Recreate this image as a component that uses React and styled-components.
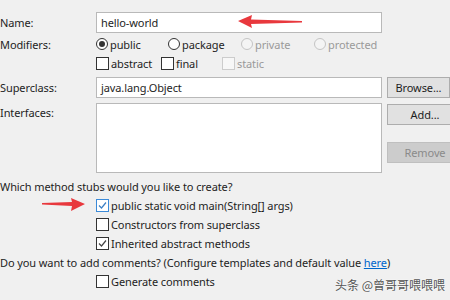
import React from "react";
import styled, { createGlobalStyle } from "styled-components";

const Global = createGlobalStyle`
  html, body {
    margin: 0;
    padding: 0;
    overflow: hidden;
    background: #f0f0f0;
  }
`;

const Page = styled.div`
  position: relative;
  width: 450px;
  height: 300px;
  overflow: hidden;
  background: #f0f0f0;
  font-family: "Noto Sans", "Noto Sans CJK SC", sans-serif;
  font-size: 11px;
  letter-spacing: -0.1px;
  color: #1e1e1e;
  padding-top: 12px;
  box-sizing: border-box;
`;

const Row = styled.div`
  display: flex;
  align-items: ${(p) => p.$align || "center"};
  height: ${(p) => p.$h}px;
  margin-top: ${(p) => p.$mt || 0}px;
`;

const Label = styled.div`
  width: 96px;
  flex: none;
  align-self: ${(p) => (p.$top ? "flex-start" : "center")};
  line-height: 19px;
  white-space: nowrap;
`;

const Indent = styled.div`
  width: 96px;
  flex: none;
`;

const Field = styled.div`
  width: 286px;
  height: ${(p) => p.$h || 21}px;
  box-sizing: border-box;
  flex: none;
  background: #fff;
  border: 1px solid #b9b9b9;
  padding: 0 4px;
  line-height: 19px;
  align-self: flex-start;
`;

const Button = styled.div`
  width: 76px;
  height: ${(p) => p.$h || 21}px;
  box-sizing: border-box;
  margin-left: 5px;
  margin-top: ${(p) => p.$mt || 0}px;
  background: ${(p) => (p.$disabled ? "#cccccc" : "#e1e1e1")};
  border: 1px solid ${(p) => (p.$disabled ? "#bfbfbf" : "#adadad")};
  color: ${(p) => (p.$disabled ? "#8a8a8a" : "#1e1e1e")};
  text-align: center;
  line-height: 19px;
`;

const ButtonCol = styled.div`
  display: flex;
  flex-direction: column;
  align-self: flex-start;
`;

const Option = styled.label`
  display: flex;
  align-items: center;
  gap: 2px;
  width: ${(p) => p.$w}px;
  flex: none;
  color: ${(p) => (p.$disabled ? "#9a9a9a" : "#1e1e1e")};
  white-space: nowrap;
`;

const Radio = styled.span`
  width: 12px;
  height: 12px;
  box-sizing: border-box;
  border-radius: 50%;
  border: 1px solid ${(p) => (p.$disabled ? "#c4c4c4" : "#333")};
  background: ${(p) => (p.$disabled ? "#f4f4f4" : "#fff")};
  display: flex;
  align-items: center;
  justify-content: center;
  flex: none;
  &::after {
    content: "";
    display: ${(p) => (p.$checked ? "block" : "none")};
    width: 6px;
    height: 6px;
    border-radius: 50%;
    background: #333;
  }
`;

const Box = styled.span`
  width: 13px;
  height: 13px;
  box-sizing: border-box;
  border: 1px solid ${(p) => (p.$disabled ? "#cccccc" : p.$focus ? "#3b8ad8" : "#333")};
  background: ${(p) => (p.$disabled ? "#f7f7f7" : "#fff")};
  display: flex;
  align-items: center;
  justify-content: center;
  flex: none;
`;

const Line = styled.div`
  height: 19px;
  line-height: 19px;
  margin-top: ${(p) => p.$mt || 0}px;
  white-space: nowrap;
`;

const Link = styled.span`
  color: #0066cc;
  text-decoration: underline;
`;

const Watermark = styled.div`
  position: absolute;
  left: 335px;
  top: 276px;
  font-family: "Noto Sans CJK SC", sans-serif;
  font-size: 12px;
  letter-spacing: 0;
  color: #555;
  text-shadow: 0 0 2px #fff;
`;

const Arrow = styled.svg`
  position: absolute;
  left: ${(p) => p.$x}px;
  top: ${(p) => p.$y}px;
`;

const Check = ({ color }) => (
  <svg width="11" height="11" viewBox="0 0 11 11">
    <path d="M2 5.5 L4.5 8 L9 2.5" fill="none" stroke={color} strokeWidth="1.2" />
  </svg>
);

const CheckOption = ({ checked, focus, disabled, w, children }) => (
  <Option $w={w} $disabled={disabled}>
    <Box $focus={focus} $disabled={disabled}>
      {checked && <Check color={focus ? "#3b7fc4" : "#444"} />}
    </Box>
    {children}
  </Option>
);

const RadioOption = ({ checked, disabled, w, children }) => (
  <Option $w={w} $disabled={disabled}>
    <Radio $checked={checked} $disabled={disabled} />
    {children}
  </Option>
);

export default function App() {
  return (
    <Page>
      <Global />
      <Row $h={21}>
        <Label>Name:</Label>
        <Field>hello-world</Field>
      </Row>
      <Row $h={20} $mt={1}>
        <Label>Modifiers:</Label>
        <RadioOption w={72} checked>public</RadioOption>
        <RadioOption w={73}>package</RadioOption>
        <RadioOption w={73} disabled>private</RadioOption>
        <RadioOption w={80} disabled>protected</RadioOption>
      </Row>
      <Row $h={19}>
        <Label />
        <CheckOption w={65}>abstract</CheckOption>
        <CheckOption w={61}>final</CheckOption>
        <CheckOption w={60} disabled>static</CheckOption>
      </Row>
      <Row $h={21} $mt={4}>
        <Label>Superclass:</Label>
        <Field>java.lang.Object</Field>
        <Button>Browse...</Button>
      </Row>
      <Row $h={70} $mt={5} $align="flex-start">
        <Label $top>Interfaces:</Label>
        <Field $h={70} />
        <ButtonCol>
          <Button $mt={1}>Add...</Button>
          <Button $mt={17} $disabled>Remove</Button>
        </ButtonCol>
      </Row>
      <Line $mt={4}>Which method stubs would you like to create?</Line>
      <Row $h={19}>
        <Indent />
        <CheckOption w={300} checked focus>public static void main(String[] args)</CheckOption>
      </Row>
      <Row $h={19}>
        <Indent />
        <CheckOption w={300}>Constructors from superclass</CheckOption>
      </Row>
      <Row $h={19}>
        <Indent />
        <CheckOption w={300} checked>Inherited abstract methods</CheckOption>
      </Row>
      <Line>
        Do you want to add comments? (Configure templates and default value <Link>here</Link>)
      </Line>
      <Row $h={19}>
        <Indent />
        <CheckOption w={300}>Generate comments</CheckOption>
      </Row>

      <Arrow $x={236} $y={13} width="68" height="18" viewBox="0 0 68 18">
        <polygon points="2,8 16,2 15,6.5 66,8 66,9.5 15,11 16,15" fill="#e8383d" />
      </Arrow>
      <Arrow $x={40} $y={196} width="48" height="16" viewBox="0 0 48 16">
        <polygon points="2,7 32,6 31,2 45,8 31,15 32,10 2,8.5" fill="#e8383d" />
      </Arrow>
      <Watermark>头条 @曾哥哥喂喂喂</Watermark>
    </Page>
  );
}
